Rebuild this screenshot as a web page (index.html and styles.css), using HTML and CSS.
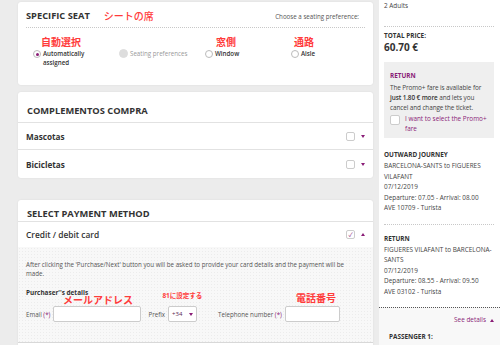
FILE: index.html
```html
<!DOCTYPE html>
<html lang="en">
<head>
    <meta charset="UTF-8">
    <title>Checkout</title>
    <link rel="stylesheet" href="styles.css">
</head>
<body>

<div class="page">
    <div class="main">
        <!-- asiento -->
        <div class="card seat">
            <div class="seat-head">
                <h2>SPECIFIC SEAT</h2>
                <span class="note note-title">シートの席</span>
                <span class="seat-hint">Choose a seating preference:</span>
            </div>
            <div class="seat-options">
                <div class="opt">
                    <span class="note note-a">自動選択</span>
                    <label><span class="radio on"></span><span>Automatically<br>assigned</span></label>
                </div>
                <div class="opt">
                    <span class="note"></span>
                    <label class="disabled"><span class="radio grey"></span><span>Seating preferences</span></label>
                </div>
                <div class="opt">
                    <span class="note note-w">窓側</span>
                    <label><span class="radio"></span><span>Window</span></label>
                </div>
                <div class="opt">
                    <span class="note note-s">通路</span>
                    <label><span class="radio"></span><span>Aisle</span></label>
                </div>
            </div>
        </div>

        <!-- complementos -->
        <div class="card extras">
            <h2 class="card-title">COMPLEMENTOS COMPRA</h2>
            <div class="row">
                <span>Mascotas</span>
                <span class="ctrl"><span class="check"></span><span class="tri down"></span></span>
            </div>
            <div class="row last">
                <span>Bicicletas</span>
                <span class="ctrl"><span class="check"></span><span class="tri down"></span></span>
            </div>
        </div>

        <!-- pago -->
        <div class="card pay">
            <h2 class="card-title pay-title">SELECT PAYMENT METHOD</h2>
            <div class="row pay-row">
                <span>Credit / debit card</span>
                <span class="ctrl"><span class="check checked">&#10003;</span><span class="tri up"></span></span>
            </div>
            <div class="pay-body">
                <p class="pay-info">After clicking the 'Purchase/Next' button you will be asked to provide your card details and the payment will be made.</p>
                <h3>Purchaser''s details</h3>
                <div class="form-row">
                    <div class="field">
                        <span class="lbl">Email <b>(*)</b></span>
                        <span class="input email"></span>
                        <span class="note note-mail">メールアドレス</span>
                    </div>
                    <div class="field">
                        <span class="lbl">Prefix</span>
                        <span class="input select">+34 <span class="tri down"></span></span>
                        <span class="note note-pre">81に設定する</span>
                    </div>
                    <div class="field">
                        <span class="lbl">Telephone number <b>(*)</b></span>
                        <span class="input tel"></span>
                        <span class="note note-tel">電話番号</span>
                    </div>
                </div>
            </div>
        </div>
    </div>

    <div class="side">
        <p class="adults">2 Adults</p>
        <div class="total">
            <h4>TOTAL PRICE:</h4>
            <p class="price">60.70 €</p>
        </div>
        <div class="promo">
            <h5>RETURN</h5>
            <p>The Promo+ fare is available for <b>just 1.80 € more</b> and lets you cancel and change the ticket.</p>
            <label><span class="check"></span><span>I want to select the Promo+ fare</span></label>
        </div>
        <div class="trip">
            <h4>OUTWARD JOURNEY</h4>
            <p>BARCELONA-SANTS to FIGUERES VILAFANT</p>
            <p>07/12/2019</p>
            <p>Departure: 07.05 - Arrival: 08.00</p>
            <p>AVE 10709 - Turista</p>
        </div>
        <div class="trip">
            <h4>RETURN</h4>
            <p>FIGUERES VILAFANT to BARCELONA-SANTS</p>
            <p>07/12/2019</p>
            <p>Departure: 08.55 - Arrival: 09.50</p>
            <p>AVE 03102 - Turista</p>
        </div>
        <div class="side-foot">
            <a class="see">See details <span class="tri up"></span></a>
            <h4>PASSENGER 1:</h4>
        </div>
    </div>
</div>

</body>
</html>
```

FILE: styles.css
```css
*{
    margin: 0;
    padding: 0;
    box-sizing: border-box;
}
body{
    background: #ececec;
    font-family: "Open Sans", "Noto Sans CJK JP", sans-serif;
    color: #333;
    overflow: hidden;
}
.page{
    display: flex;
    align-items: flex-start;
    gap: 6px;
    padding-left: 18px;
}
.main{
    width: 355px;
    padding-top: 2px;
    display: flex;
    flex-direction: column;
}
.card{
    background: #fff;
    border-radius: 3px;
    box-shadow: 0 0 2px rgba(0,0,0,.08);
    padding: 0 8px;
}
h2{
    font-size: 9.3px;
    font-weight: 700;
    color: #333;
    line-height: 12px;
}
.note{
    color: #ff3b3b;
    font-size: 10px;
    font-weight: 700;
    line-height: 12px;
    white-space: nowrap;
}

/* asiento */
.seat{
    height: 83px;
}
.seat-head{
    display: flex;
    align-items: center;
    padding: 8px 0 5px;
    border-bottom: 1px dotted #c8c8c8;
}
.note-title{
    margin-left: 14px;
    font-weight: 500;
}
.seat-hint{
    margin-left: auto;
    margin-right: 6px;
    font-size: 6.2px;
    color: #555;
}
.seat-options{
    display: grid;
    grid-template-columns: 86px 86px 86px 86px;
    padding: 8px 0 0 7px;
}
.opt .note{
    display: block;
    height: 13px;
}
.note-a{ padding-left: 8px; }
.note-w{ padding-left: 11px; }
.note-s{ padding-left: 3px; }
.opt label{
    display: flex;
    align-items: flex-start;
    gap: 2px;
    font-size: 6.2px;
    font-weight: 600;
    line-height: 9px;
    color: #333;
}
.opt label.disabled{
    color: #999;
    font-weight: 400;
}
.radio{
    width: 8px;
    height: 8px;
    border: 1px solid #bbb;
    border-radius: 50%;
    background: #fff;
    flex-shrink: 0;
    display: flex;
    align-items: center;
    justify-content: center;
    margin-top: 1px;
}
.radio.on::after{
    content: "";
    width: 3px;
    height: 3px;
    border-radius: 50%;
    background: #8a1d77;
}
.radio.grey{
    width: 9px;
    height: 9px;
    background: #ddd;
    border-color: #ddd;
    margin-top: 0;
}

/* filas */
.extras{
    margin-top: 7px;
    padding: 0;
}
.card-title{
    padding: 13px 8px 5px 9px;
    border-bottom: 1px solid #e2e2e2;
}
.row{
    display: flex;
    align-items: center;
    justify-content: space-between;
    height: 27px;
    padding: 0 8px;
    border-bottom: 1px solid #e2e2e2;
    font-size: 8.2px;
    font-weight: 700;
    color: #333;
}
.row.last{
    height: 28px;
    border-bottom: 0;
}
.ctrl{
    display: flex;
    align-items: center;
    gap: 6px;
}
.check{
    width: 9px;
    height: 9px;
    border: 1px solid #ccc;
    border-radius: 2px;
    background: #fff;
    display: inline-flex;
    align-items: center;
    justify-content: center;
    flex-shrink: 0;
}
.check.checked{
    font-size: 6px;
    color: #8a1d77;
    font-weight: 400;
}
.tri{
    display: inline-block;
    width: 0;
    height: 0;
    border-left: 2.5px solid transparent;
    border-right: 2.5px solid transparent;
}
.tri.down{
    border-top: 3px solid #8a1d77;
}
.tri.up{
    border-bottom: 3px solid #8a1d77;
}

/* pago */
.pay{
    margin-top: 22px;
    padding: 0;
    height: 160px;
    overflow: hidden;
}
.pay-title{
    padding-top: 8px;
    padding-bottom: 1px;
}
.pay-row{
    height: 25px;
    font-size: 8.4px;
    font-weight: 600;
    border-bottom: 0;
}
.pay-body{
    background-color: #f8f8f8;
    background-image: radial-gradient(#ececec 0.6px, transparent 0.7px);
    background-size: 3px 3px;
    padding: 14px 8px 0;
    height: 96px;
    border-bottom: 1px solid #d8d8d8;
}
.pay-info{
    font-size: 6.2px;
    line-height: 8.5px;
    color: #555;
    padding-right: 12px;
}
.pay-body h3{
    font-size: 6.4px;
    font-weight: 700;
    color: #333;
    margin-top: 11px;
    line-height: 8px;
}
.form-row{
    display: flex;
    align-items: center;
    margin-top: 9px;
}
.field{
    position: relative;
    display: flex;
    align-items: center;
    gap: 3px;
    font-size: 6.2px;
    color: #555;
}
.field + .field{
    margin-left: 7px;
}
.field:last-child{
    margin-left: 21px;
}
.lbl b{
    color: #8a1d77;
    font-weight: 400;
}
.input{
    display: inline-flex;
    align-items: center;
    height: 16px;
    background: #fff;
    border: 1px solid #ccc;
    border-radius: 2px;
}
.email{ width: 88px; }
.tel{ width: 55px; }
.select{
    width: 29px;
    padding: 0 3px;
    justify-content: space-between;
    color: #5a2a55;
    font-size: 6px;
}
.field .note{
    position: absolute;
}
.note-mail{
    left: 37px;
    top: -12px;
    font-size: 10px;
}
.note-pre{
    left: 14px;
    top: -16px;
    font-size: 6.5px;
}
.note-tel{
    left: 78px;
    top: -14px;
    font-size: 10px;
}

/* lateral */
.side{
    width: 121px;
    min-height: 345px;
    background: #fff;
    padding: 0 6px 0 5px;
    font-size: 6.4px;
    color: #444;
    line-height: 10px;
}
.adults{
    padding-top: 1px;
    height: 27px;
    border-bottom: 1px dotted #c8c8c8;
}
.side h4{
    font-size: 6.4px;
    font-weight: 700;
    color: #333;
    line-height: 10px;
}
.total{
    padding-top: 4px;
    height: 35px;
}
.price{
    font-size: 10px;
    font-weight: 700;
    color: #333;
    line-height: 13px;
}
.promo{
    background: #efefef;
    width: 110px;
    padding: 9px 4px 4px 6px;
    height: 76px;
}
.promo h5{
    color: #8a1d77;
    font-size: 6.4px;
    font-weight: 700;
    line-height: 10px;
    margin-bottom: 2px;
}
.promo p{
    line-height: 10px;
    letter-spacing: -0.1px;
}
.promo b{
    font-weight: 600;
    color: #333;
}
.promo label{
    display: flex;
    gap: 5px;
    color: #8a1d77;
    margin-top: 1px;
}
.promo .check{
    width: 10px;
    height: 10px;
    margin-top: 1px;
}
.trip{
    padding: 12px 0 10px;
}
.trip + .trip{
    border-top: 1px dotted #c8c8c8;
    padding-top: 9px;
}
.trip h4{
    margin-bottom: 1px;
}
.trip p{
    line-height: 10.5px;
}
.side-foot{
    margin: 0 -6px 0 -5px;
    padding: 7px 6px 0 10px;
    border-top: 1px dotted #555;
    background: #f8f8f8;
    min-height: 40px;
}
.see{
    display: flex;
    align-items: center;
    justify-content: flex-end;
    gap: 4px;
    color: #8a1d77;
    margin-bottom: 7px;
}
```
